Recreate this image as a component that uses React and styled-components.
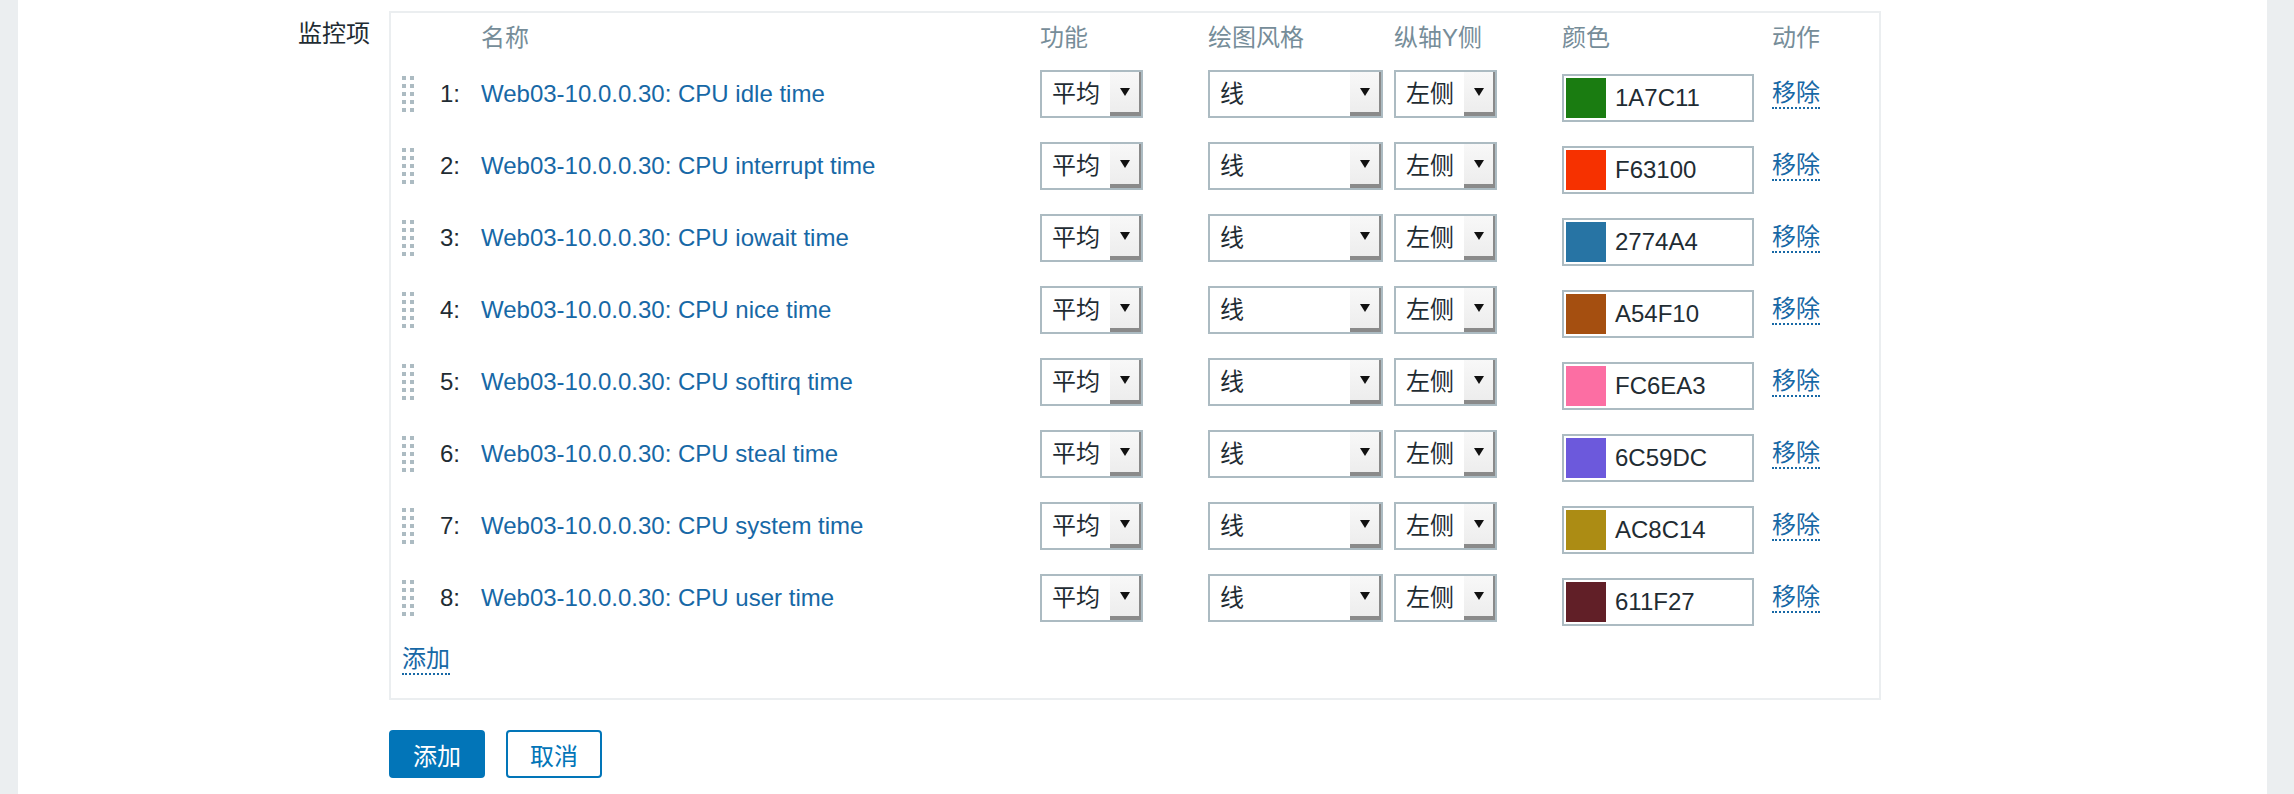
import React from "react";
import styled, { createGlobalStyle } from "styled-components";

const items = [
  { name: "CPU idle time", color: "1A7C11" },
  { name: "CPU interrupt time", color: "F63100" },
  { name: "CPU iowait time", color: "2774A4" },
  { name: "CPU nice time", color: "A54F10" },
  { name: "CPU softirq time", color: "FC6EA3" },
  { name: "CPU steal time", color: "6C59DC" },
  { name: "CPU system time", color: "AC8C14" },
  { name: "CPU user time", color: "611F27" },
];

const GlobalStyle = createGlobalStyle`
  html, body {
    margin: 0;
    padding: 0;
  }
  body {
    font-family: "Liberation Sans", "Noto Sans CJK SC", sans-serif;
    font-size: 24px;
    color: #1f2c33;
    background: #ebeef0;
  }
`;

const DragHandle = () => (
  <svg width="12" height="36" viewBox="0 0 12 36">
    {[0, 8, 16, 24, 32].map((y) =>
      [0, 8].map((x) => (
        <rect key={`${x}-${y}`} x={x} y={y} width="4" height="4" fill="#acbbc2" />
      ))
    )}
  </svg>
);

const FakeSelect = ({ value, width }) => (
  <Select $w={width}>
    <SelectValue>{value}</SelectValue>
    <SelectArrow />
  </Select>
);

const App = () => {
  return (
    <Page>
      <GlobalStyle />
      <Side $w={18} />
      <Main>
        <Form>
          <Label>监控项</Label>
          <Panel>
            <Grid>
              <Head />
              <Head />
              <Head>名称</Head>
              <Head>功能</Head>
              <Head>绘图风格</Head>
              <Head>纵轴Y侧</Head>
              <Head>颜色</Head>
              <Head>动作</Head>
              {items.map((it, i) => (
                <React.Fragment key={it.color}>
                  <Cell>
                    <DragHandle />
                  </Cell>
                  <Num>{i + 1}:</Num>
                  <Cell>
                    <Link>Web03-10.0.0.30: {it.name}</Link>
                  </Cell>
                  <Cell>
                    <FakeSelect value="平均" width={103} />
                  </Cell>
                  <Cell>
                    <FakeSelect value="线" width={175} />
                  </Cell>
                  <Cell>
                    <FakeSelect value="左侧" width={103} />
                  </Cell>
                  <Cell>
                    <ColorInput>
                      <Swatch style={{ background: `#${it.color}` }} />
                      <ColorText>{it.color}</ColorText>
                    </ColorInput>
                  </Cell>
                  <Cell>
                    <DottedLink>移除</DottedLink>
                  </Cell>
                </React.Fragment>
              ))}
            </Grid>
            <AddRow>
              <DottedLink>添加</DottedLink>
            </AddRow>
          </Panel>
          <span />
          <Buttons>
            <PrimaryButton>添加</PrimaryButton>
            <OutlineButton>取消</OutlineButton>
          </Buttons>
        </Form>
      </Main>
      <Side $w={27} />
    </Page>
  );
};

export default App;

const Page = styled.div`
  display: flex;
  height: 100vh;
`;

const Side = styled.div`
  flex: 0 0 ${(p) => p.$w}px;
  background: #ebeef0;
`;

const Main = styled.div`
  flex: 1;
  background: #ffffff;
  padding-top: 11px;
`;

const Form = styled.div`
  display: grid;
  grid-template-columns: 352px 1492px;
  column-gap: 19px;
  row-gap: 30px;
`;

const Label = styled.div`
  text-align: right;
  padding-top: 8px;
  line-height: 30px;
`;

const Panel = styled.div`
  box-sizing: border-box;
  border: 2px solid #ebeef0;
  padding: 0 0 23px 11px;
`;

const Grid = styled.div`
  display: grid;
  grid-template-columns: 24px 55px 559px 168px 186px 168px 210px auto;
  grid-template-rows: 45px;
  grid-auto-rows: 72px;
`;

const Head = styled.div`
  padding-top: 10px;
  line-height: 30px;
  color: #768d99;
  white-space: nowrap;
`;

const Cell = styled.div`
  display: flex;
  align-items: center;
  white-space: nowrap;
`;

const Num = styled(Cell)`
  justify-content: flex-end;
  padding-right: 21px;
`;

const Link = styled.span`
  color: #1768a6;
  cursor: pointer;
`;

const DottedLink = styled.span`
  display: inline-block;
  color: #1768a6;
  line-height: 28px;
  border-bottom: 2px dotted #1768a6;
  cursor: pointer;
`;

const Select = styled.div`
  display: inline-flex;
  align-items: stretch;
  box-sizing: border-box;
  width: ${(p) => p.$w}px;
  height: 48px;
  border: 2px solid #acbbc2;
  background: #ffffff;
`;

const SelectValue = styled.span`
  flex: 1;
  padding-left: 10px;
  line-height: 44px;
  color: #1f2c33;
`;

const SelectArrow = styled.span`
  position: relative;
  flex: 0 0 31px;
  background: linear-gradient(#f8f8f8, #ececec);
  box-shadow: inset -2px -4px 0 #8a8a8a;

  &::after {
    content: "";
    position: absolute;
    left: 10px;
    top: 16px;
    border-left: 5px solid transparent;
    border-right: 5px solid transparent;
    border-top: 8px solid #111111;
  }
`;

const ColorInput = styled.div`
  display: flex;
  align-items: center;
  box-sizing: border-box;
  width: 192px;
  height: 48px;
  margin-top: 8px;
  padding: 2px;
  border: 2px solid #acbbc2;
  background: #ffffff;
`;

const Swatch = styled.span`
  flex: 0 0 40px;
  height: 40px;
`;

const ColorText = styled.span`
  margin-left: 9px;
  color: #1f2c33;
`;

const AddRow = styled.div`
  padding-top: 11px;
`;

const Buttons = styled.div`
  display: flex;
  gap: 21px;
`;

const Button = styled.button`
  box-sizing: border-box;
  height: 48px;
  padding: 0 22px;
  border: 2px solid #0275b8;
  border-radius: 4px;
  font-family: inherit;
  font-size: 24px;
  cursor: pointer;
`;

const PrimaryButton = styled(Button)`
  background: #0275b8;
  color: #ffffff;
`;

const OutlineButton = styled(Button)`
  background: #ffffff;
  color: #0275b8;
`;
